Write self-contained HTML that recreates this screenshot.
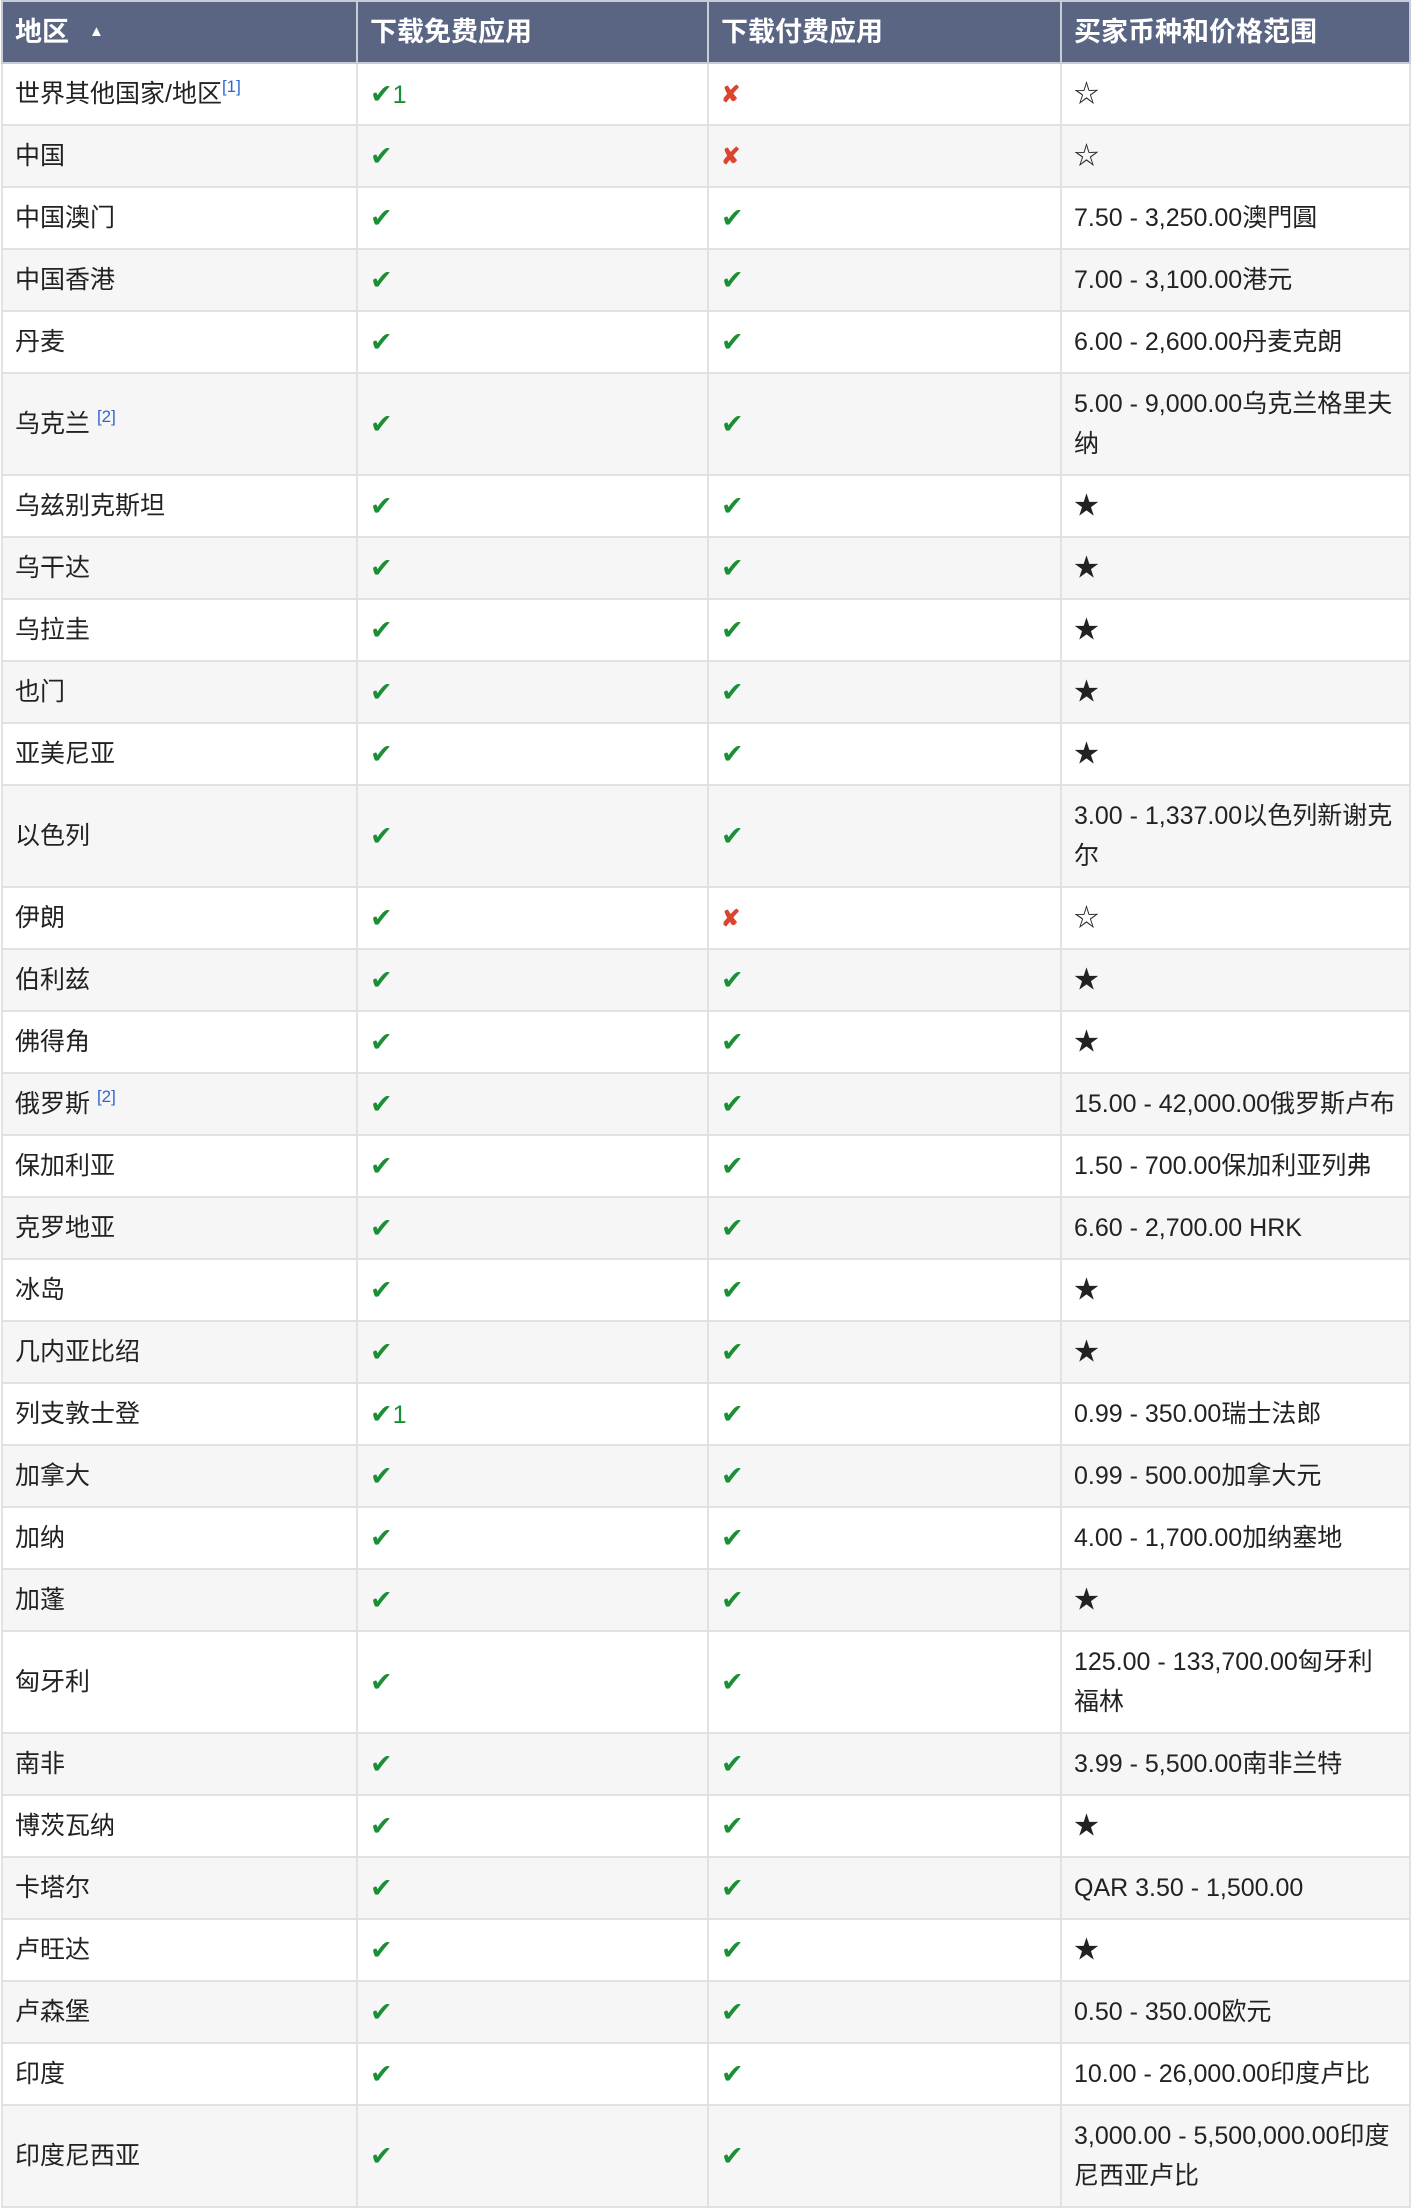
<!DOCTYPE html>
<html><head><meta charset="utf-8"><style>
body{margin:0;background:#fff;font-family:"Liberation Sans","Noto Sans CJK SC",sans-serif;color:#222;}
table{border-collapse:collapse;width:1408px;table-layout:fixed;margin:0 0 0 1px;}
th,td{border:2px solid #e2e2e2;padding:0 0 0 12px;text-align:left;vertical-align:middle;font-size:25px;line-height:40px;white-space:nowrap;overflow:hidden}
th{background:#5a6584;color:#fff;font-weight:bold;height:59px;border-color:#c8ccd6;font-size:27px}
tr{height:62px}
tr.d{height:102px}
tbody tr:nth-child(even) td{background:#f6f6f6}
.y{color:#1a8f35;font-size:27px}
.y span{font-size:25px}
.n{color:#d9452f;font-weight:bold;font-size:23px}
sup{color:#3366cc;font-size:17px;line-height:0;vertical-align:10px}
.ar{font-size:15px;vertical-align:5px;margin-left:20px}
</style></head><body>
<table>
<colgroup><col style="width:355px"><col style="width:351px"><col style="width:353px"><col style="width:349px"></colgroup>
<thead><tr><th>地区<span class="ar">▲</span></th><th>下载免费应用</th><th>下载付费应用</th><th>买家币种和价格范围</th></tr></thead>
<tbody>
<tr><td>世界其他国家/地区<sup>[1]</sup></td><td class="y">✔<span>1</span></td><td class="n">✘</td><td>☆</td></tr>
<tr><td>中国</td><td class="y">✔</td><td class="n">✘</td><td>☆</td></tr>
<tr><td>中国澳门</td><td class="y">✔</td><td class="y">✔</td><td>7.50 - 3,250.00澳門圓</td></tr>
<tr><td>中国香港</td><td class="y">✔</td><td class="y">✔</td><td>7.00 - 3,100.00港元</td></tr>
<tr><td>丹麦</td><td class="y">✔</td><td class="y">✔</td><td>6.00 - 2,600.00丹麦克朗</td></tr>
<tr class="d"><td>乌克兰 <sup>[2]</sup></td><td class="y">✔</td><td class="y">✔</td><td>5.00 - 9,000.00乌克兰格里夫<br>纳</td></tr>
<tr><td>乌兹别克斯坦</td><td class="y">✔</td><td class="y">✔</td><td>★</td></tr>
<tr><td>乌干达</td><td class="y">✔</td><td class="y">✔</td><td>★</td></tr>
<tr><td>乌拉圭</td><td class="y">✔</td><td class="y">✔</td><td>★</td></tr>
<tr><td>也门</td><td class="y">✔</td><td class="y">✔</td><td>★</td></tr>
<tr><td>亚美尼亚</td><td class="y">✔</td><td class="y">✔</td><td>★</td></tr>
<tr class="d"><td>以色列</td><td class="y">✔</td><td class="y">✔</td><td>3.00 - 1,337.00以色列新谢克<br>尔</td></tr>
<tr><td>伊朗</td><td class="y">✔</td><td class="n">✘</td><td>☆</td></tr>
<tr><td>伯利兹</td><td class="y">✔</td><td class="y">✔</td><td>★</td></tr>
<tr><td>佛得角</td><td class="y">✔</td><td class="y">✔</td><td>★</td></tr>
<tr><td>俄罗斯 <sup>[2]</sup></td><td class="y">✔</td><td class="y">✔</td><td>15.00 - 42,000.00俄罗斯卢布</td></tr>
<tr><td>保加利亚</td><td class="y">✔</td><td class="y">✔</td><td>1.50 - 700.00保加利亚列弗</td></tr>
<tr><td>克罗地亚</td><td class="y">✔</td><td class="y">✔</td><td>6.60 - 2,700.00 HRK</td></tr>
<tr><td>冰岛</td><td class="y">✔</td><td class="y">✔</td><td>★</td></tr>
<tr><td>几内亚比绍</td><td class="y">✔</td><td class="y">✔</td><td>★</td></tr>
<tr><td>列支敦士登</td><td class="y">✔<span>1</span></td><td class="y">✔</td><td>0.99 - 350.00瑞士法郎</td></tr>
<tr><td>加拿大</td><td class="y">✔</td><td class="y">✔</td><td>0.99 - 500.00加拿大元</td></tr>
<tr><td>加纳</td><td class="y">✔</td><td class="y">✔</td><td>4.00 - 1,700.00加纳塞地</td></tr>
<tr><td>加蓬</td><td class="y">✔</td><td class="y">✔</td><td>★</td></tr>
<tr class="d"><td>匈牙利</td><td class="y">✔</td><td class="y">✔</td><td>125.00 - 133,700.00匈牙利<br>福林</td></tr>
<tr><td>南非</td><td class="y">✔</td><td class="y">✔</td><td>3.99 - 5,500.00南非兰特</td></tr>
<tr><td>博茨瓦纳</td><td class="y">✔</td><td class="y">✔</td><td>★</td></tr>
<tr><td>卡塔尔</td><td class="y">✔</td><td class="y">✔</td><td>QAR 3.50 - 1,500.00</td></tr>
<tr><td>卢旺达</td><td class="y">✔</td><td class="y">✔</td><td>★</td></tr>
<tr><td>卢森堡</td><td class="y">✔</td><td class="y">✔</td><td>0.50 - 350.00欧元</td></tr>
<tr><td>印度</td><td class="y">✔</td><td class="y">✔</td><td>10.00 - 26,000.00印度卢比</td></tr>
<tr class="d"><td>印度尼西亚</td><td class="y">✔</td><td class="y">✔</td><td>3,000.00 - 5,500,000.00印度<br>尼西亚卢比</td></tr>
</tbody></table>
</body></html>
